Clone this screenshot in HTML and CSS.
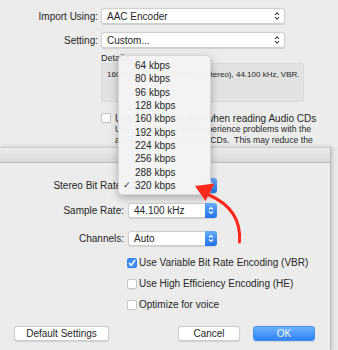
FILE: index.html
```html
<!DOCTYPE html>
<html>
<head>
<meta charset="utf-8">
<link rel="stylesheet" href="styles.css">
</head>
<body>
<div class="back">
  <div class="form-row">
    <span class="lbl">Import Using:</span>
    <div class="popup"><span>AAC Encoder</span>
      <svg class="chev" width="6" height="10" viewBox="0 0 6 10"><path d="M1 4 L3 1.8 L5 4 M1 6 L3 8.2 L5 6" fill="none" stroke="#444" stroke-width="1.1"/></svg>
    </div>
  </div>
  <div class="form-row second">
    <span class="lbl">Setting:</span>
    <div class="popup"><span>Custom...</span>
      <svg class="chev" width="6" height="10" viewBox="0 0 6 10"><path d="M1 4 L3 1.8 L5 4 M1 6 L3 8.2 L5 6" fill="none" stroke="#444" stroke-width="1.1"/></svg>
    </div>
  </div>
  <div class="details">
    <div class="details-label">Details:</div>
    <div class="details-box">160 kbps (mono)/320 kbps (stereo), 44.100 kHz, VBR.</div>
  </div>
  <div class="err-row">
    <span class="cb"></span>
    <div class="err-text">
      <div class="err-label">Use error correction when reading Audio CDs</div>
      <div class="note">Use this option if you experience problems with the</div>
      <div class="note">audio quality from Audio CDs.&nbsp; This may reduce the</div>
    </div>
  </div>
</div>

<div class="sheet">
  <div class="sheet-bar"></div>
  <div class="sheet-body">
    <div class="s-row first">
      <span class="lbl">Stereo Bit Rate:</span>
      <div class="bpop"><span>320 kbps</span><span class="stepper"><svg width="6" height="9" viewBox="0 0 6 9"><path d="M1 3.5 L3 1.5 L5 3.5 M1 5.5 L3 7.5 L5 5.5" fill="none" stroke="#fff" stroke-width="1.1"/></svg></span></div>
    </div>
    <div class="s-row">
      <span class="lbl">Sample Rate:</span>
      <div class="bpop"><span>44.100 kHz</span><span class="stepper"><svg width="6" height="9" viewBox="0 0 6 9"><path d="M1 3.5 L3 1.5 L5 3.5 M1 5.5 L3 7.5 L5 5.5" fill="none" stroke="#fff" stroke-width="1.1"/></svg></span></div>
    </div>
    <div class="s-row third">
      <span class="lbl">Channels:</span>
      <div class="bpop"><span>Auto</span><span class="stepper"><svg width="6" height="9" viewBox="0 0 6 9"><path d="M1 3.5 L3 1.5 L5 3.5 M1 5.5 L3 7.5 L5 5.5" fill="none" stroke="#fff" stroke-width="1.1"/></svg></span></div>
    </div>
    <div class="checks">
      <div class="c-row"><span class="cb on"><svg width="10" height="10" viewBox="0 0 10 10"><path d="M2.3 5.2 L4.2 7.3 L7.8 2.4" fill="none" stroke="#fff" stroke-width="1.5" stroke-linecap="round" stroke-linejoin="round"/></svg></span><span>Use Variable Bit Rate Encoding (VBR)</span></div>
      <div class="c-row"><span class="cb"></span><span>Use High Efficiency Encoding (HE)</span></div>
      <div class="c-row"><span class="cb"></span><span>Optimize for voice</span></div>
    </div>
    <div class="buttons">
      <div class="btn wide">Default Settings</div>
      <div class="btn cancel">Cancel</div>
      <div class="btn ok">OK</div>
    </div>
  </div>
</div>

<div class="menu">
  <div class="item">64 kbps</div>
  <div class="item">80 kbps</div>
  <div class="item">96 kbps</div>
  <div class="item">128 kbps</div>
  <div class="item">160 kbps</div>
  <div class="item">192 kbps</div>
  <div class="item">224 kbps</div>
  <div class="item">256 kbps</div>
  <div class="item">288 kbps</div>
  <div class="item checked"><span class="tick">✓</span>320 kbps</div>
</div>

<svg class="arrow" width="60" height="75" viewBox="190 175 60 75">
  <path d="M239.5 242 C 241 222, 232 205, 209 195" fill="none" stroke="#ff2a1c" stroke-width="3" stroke-linecap="round"/>
  <path d="M195 186 L214.5 183.5 L205.5 201 Z" fill="#ff2a1c"/>
</svg>
</body>
</html>
```
FILE: styles.css
```css
html, body {
  margin: 0;
  padding: 0;
}
body {
  width: 338px;
  height: 350px;
  overflow: hidden;
  position: relative;
  background: #e9e9e9;
  font-family: "Liberation Sans", Arial, sans-serif;
  font-size: 10px;
  color: #262626;
}

/* back dialog */
.back {
  height: 147px;
  overflow: hidden;
  padding-top: 8px;
  box-sizing: border-box;
  background: #ececec;
}
.form-row {
  display: grid;
  grid-template-columns: 98px 184px;
  column-gap: 3px;
  align-items: center;
  height: 16px;
}
.form-row.second {
  margin-top: 8px;
}
.lbl {
  text-align: right;
  white-space: nowrap;
}
.popup {
  height: 16px;
  box-sizing: border-box;
  background: #fff;
  border: 1px solid #cfcfcf;
  border-radius: 3px;
  box-shadow: 0 0.5px 1px rgba(0,0,0,0.12);
  display: flex;
  align-items: center;
  justify-content: space-between;
  padding: 0 4px 0 5px;
}
.chev {
  display: block;
}
.details {
  margin: 6px 0 0 101px;
  width: 203px;
}
.details-label {
  font-size: 9px;
  line-height: 9px;
}
.details-box {
  height: 39px;
  box-sizing: border-box;
  background: #e2e2e2;
  border: 1px solid #dadada;
  border-radius: 2px;
  font-size: 8px;
  line-height: 8px;
  padding: 7px 0 0 5px;
  white-space: nowrap;
  overflow: hidden;
}
.err-row {
  margin: 11px 0 0 101px;
  display: flex;
  gap: 4px;
}
.cb {
  width: 10px;
  height: 10px;
  flex: none;
  box-sizing: border-box;
  background: #fff;
  border: 1px solid #c6c6c6;
  border-radius: 2px;
  box-shadow: 0 0.5px 0.5px rgba(0,0,0,0.08);
}
.err-label {
  line-height: 11px;
  margin-top: -0.5px;
  white-space: nowrap;
}
.note {
  font-size: 8.7px;
  line-height: 11px;
  white-space: nowrap;
}

/* front sheet */
.sheet {
  width: 331px;
  height: 203px;
  box-sizing: border-box;
  background: #ececec;
  border-right: 1px solid #bdbdbd;
  box-shadow: 1px 0 4px rgba(0,0,0,0.18);
  position: relative;
}
.sheet-bar {
  height: 16px;
  box-sizing: border-box;
  border-top: 1px solid #cdcdcd;
  border-bottom: 1px solid #bcbcbc;
  background: linear-gradient(#ebebeb, #d9d9d9);
}
.sheet-body {
  padding-top: 15px;
}
.s-row {
  display: grid;
  grid-template-columns: 124px 89px;
  column-gap: 4px;
  align-items: center;
  height: 15px;
  margin-top: 10px;
}
.s-row.first {
  margin-top: 0;
}
.s-row.third {
  margin-top: 13px;
}
.bpop {
  height: 15px;
  box-sizing: border-box;
  background: #fff;
  border: 1px solid #cfcfcf;
  border-radius: 3px;
  box-shadow: 0 0.5px 1px rgba(0,0,0,0.12);
  display: flex;
  align-items: center;
  justify-content: space-between;
  padding-left: 5px;
}
.stepper {
  width: 12px;
  height: 15px;
  margin: -1px -1px -1px 0;
  border-radius: 0 3px 3px 0;
  background: linear-gradient(#66adfc, #1f72ee);
  display: flex;
  align-items: center;
  justify-content: center;
}
.stepper svg {
  display: block;
}
.checks {
  margin: 12px 0 0 127px;
}
.c-row {
  display: flex;
  align-items: center;
  gap: 2px;
  height: 10px;
  margin-bottom: 11px;
  white-space: nowrap;
}
.c-row span:last-child {
  line-height: 10px;
}
.cb.on {
  background: #3d8ff6;
  border-color: #3384ef;
}
.cb.on svg {
  display: block;
  margin: -1px;
}
.buttons {
  display: flex;
  align-items: center;
  padding: 5px 15px 0 14px;
}
.btn {
  height: 15px;
  box-sizing: border-box;
  background: #fff;
  border: 1px solid #cdcdcd;
  border-radius: 3px;
  box-shadow: 0 0.5px 1px rgba(0,0,0,0.12);
  display: flex;
  align-items: center;
  justify-content: center;
}
.btn.wide {
  width: 95px;
}
.btn.cancel {
  width: 62px;
  margin-left: auto;
}
.btn.ok {
  width: 62px;
  margin-left: 13px;
  color: #f4f8ff;
  border-color: #3f8ff3;
  background: linear-gradient(#6cb2fd, #2f82f4);
}

/* popup menu */
.menu {
  position: absolute;
  left: 118px;
  top: 55px;
  width: 93px;
  height: 140px;
  box-sizing: border-box;
  padding-top: 3px;
  background: rgba(243,243,243,0.98);
  border: 1px solid rgba(0,0,0,0.12);
  border-radius: 5px;
  box-shadow: 0 3px 9px rgba(0,0,0,0.28);
}
.item {
  height: 13.33px;
  line-height: 13.33px;
  padding-left: 16px;
  position: relative;
  white-space: nowrap;
}
.tick {
  position: absolute;
  left: 4px;
  top: 0;
  font-family: "DejaVu Sans", sans-serif;
  font-size: 9px;
}

.arrow {
  position: absolute;
  left: 190px;
  top: 175px;
}
```
